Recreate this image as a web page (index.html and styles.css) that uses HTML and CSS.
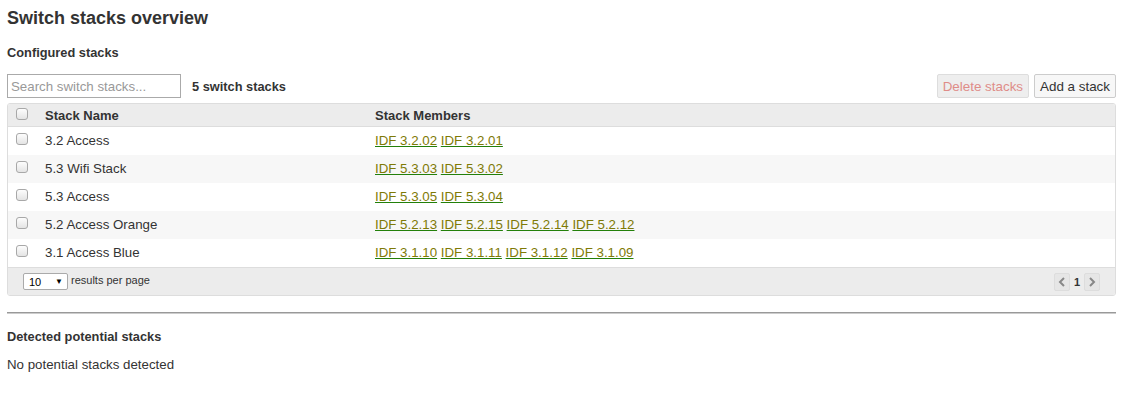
FILE: index.html
```html
<!DOCTYPE html>
<html>
<head>
<meta charset="utf-8">
<link rel="stylesheet" href="styles.css">
</head>
<body>
<div class="page">
  <h1 class="title">Switch stacks overview</h1>
  <h2 class="section-title">Configured stacks</h2>
  <div class="toolbar">
    <div class="toolbar-left">
      <input class="search" type="text" placeholder="Search switch stacks...">
      <span class="count">5 switch stacks</span>
    </div>
    <div class="toolbar-right">
      <button class="btn btn-disabled">Delete stacks</button>
      <button class="btn">Add a stack</button>
    </div>
  </div>
  <div class="table-box">
    <div class="row head">
      <div class="cell-check"><span class="cb"></span></div>
      <div class="cell-name">Stack Name</div>
      <div class="cell-members">Stack Members</div>
    </div>
    <div class="row">
      <div class="cell-check"><span class="cb"></span></div>
      <div class="cell-name">3.2 Access</div>
      <div class="cell-members"><a href="#">IDF 3.2.02</a> <a href="#">IDF 3.2.01</a></div>
    </div>
    <div class="row alt">
      <div class="cell-check"><span class="cb"></span></div>
      <div class="cell-name">5.3 Wifi Stack</div>
      <div class="cell-members"><a href="#">IDF 5.3.03</a> <a href="#">IDF 5.3.02</a></div>
    </div>
    <div class="row">
      <div class="cell-check"><span class="cb"></span></div>
      <div class="cell-name">5.3 Access</div>
      <div class="cell-members"><a href="#">IDF 5.3.05</a> <a href="#">IDF 5.3.04</a></div>
    </div>
    <div class="row alt">
      <div class="cell-check"><span class="cb"></span></div>
      <div class="cell-name">5.2 Access Orange</div>
      <div class="cell-members"><a href="#">IDF 5.2.13</a> <a href="#">IDF 5.2.15</a> <a href="#">IDF 5.2.14</a> <a href="#">IDF 5.2.12</a></div>
    </div>
    <div class="row">
      <div class="cell-check"><span class="cb"></span></div>
      <div class="cell-name">3.1 Access Blue</div>
      <div class="cell-members"><a href="#">IDF 3.1.10</a> <a href="#">IDF 3.1.11</a> <a href="#">IDF 3.1.12</a> <a href="#">IDF 3.1.09</a></div>
    </div>
    <div class="footer">
      <div class="per-page">
        <span class="select"><span>10</span><span class="arrow">&#9660;</span></span>
        <span class="per-label">results per page</span>
      </div>
      <div class="pager">
        <span class="pg-btn"><svg width="8" height="10" viewBox="0 0 8 10"><path d="M6 1 L2 5 L6 9" fill="none" stroke="#888" stroke-width="2"/></svg></span>
        <span class="pg-num">1</span>
        <span class="pg-btn"><svg width="8" height="10" viewBox="0 0 8 10"><path d="M2 1 L6 5 L2 9" fill="none" stroke="#888" stroke-width="2"/></svg></span>
      </div>
    </div>
  </div>
  <hr class="divider">
  <h2 class="section-title detected">Detected potential stacks</h2>
  <p class="empty">No potential stacks detected</p>
</div>
</body>
</html>
```

FILE: styles.css
```css
html, body {
  margin: 0;
  padding: 0;
  background: #fff;
}
body {
  font-family: "Liberation Sans", Arial, sans-serif;
  font-size: 13.3px;
  color: #333;
}
.page {
  padding: 7px 8px 0 7px;
}
.title {
  font-size: 18px;
  font-weight: bold;
  margin: 0;
  line-height: 22px;
  color: #333;
}
.section-title {
  font-size: 12.8px;
  font-weight: bold;
  margin: 0;
  line-height: 16px;
  margin-top: 16px;
  color: #333;
}
.toolbar {
  display: flex;
  justify-content: space-between;
  align-items: center;
  margin-top: 13px;
  height: 24px;
}
.toolbar-left {
  display: flex;
  align-items: center;
}
.search {
  box-sizing: border-box;
  width: 174px;
  height: 24px;
  border: 1px solid #aaa;
  padding: 1px 3px;
  font-family: "Liberation Sans", Arial, sans-serif;
  font-size: 13.3px;
  margin: 0;
  border-radius: 0;
  outline: none;
}
.search::placeholder {
  color: #999;
}
.count {
  font-weight: bold;
  font-size: 12.8px;
  margin-left: 11px;
}
.toolbar-right {
  display: flex;
  gap: 5px;
}
.btn {
  box-sizing: border-box;
  height: 24px;
  padding: 0 5px;
  font-family: "Liberation Sans", Arial, sans-serif;
  font-size: 13.4px;
  color: #333;
  background: #f7f7f7;
  border: 1px solid #ccc;
  border-radius: 2px;
}
.btn-disabled {
  color: #df8c88;
  background: #eee;
  border-color: #ddd;
}
.table-box {
  margin-top: 5px;
  border: 1px solid #ddd;
  border-radius: 3px;
  overflow: hidden;
}
.row {
  display: flex;
  align-items: center;
  box-sizing: border-box;
  height: 28px;
  padding-bottom: 2px;
  background: #fff;
}
.row.alt {
  background: #f7f7f7;
}
.row.head {
  height: 23px;
  padding-bottom: 0;
  background: #ececec;
  border-bottom: 1px solid #ddd;
  font-weight: bold;
  font-size: 13px;
}
.cell-check {
  box-sizing: border-box;
  width: 37px;
  padding-left: 8px;
  display: flex;
}
.cb {
  box-sizing: border-box;
  width: 12px;
  height: 12px;
  margin-bottom: 2px;
  border: 1px solid #a8a8a8;
  border-radius: 3px;
  background: linear-gradient(#fdfdfd, #e4e4e4);
}
.cell-name {
  width: 330px;
}
.cell-members a {
  color: #7f7a06;
  text-decoration: underline;
  text-decoration-color: #23800a;
}
.footer {
  display: flex;
  justify-content: space-between;
  align-items: center;
  height: 27px;
  background: #ececec;
  border-top: 1px solid #ddd;
  padding: 0 15px;
}
.per-page {
  display: flex;
  align-items: center;
}
.select {
  box-sizing: border-box;
  display: inline-flex;
  justify-content: space-between;
  align-items: center;
  width: 45px;
  height: 17px;
  border: 1px solid #aaa;
  border-radius: 2px;
  background: #fff;
  padding: 0 4px 0 5px;
  font-size: 11px;
  color: #000;
}
.arrow {
  font-size: 8px;
}
.per-label {
  font-size: 11px;
  margin-left: 3px;
  margin-bottom: 3px;
}
.pager {
  display: flex;
  align-items: center;
  gap: 4px;
}
.pg-btn {
  box-sizing: border-box;
  width: 16px;
  height: 18px;
  border: 1px solid #ddd;
  border-radius: 2px;
  background: #e6e6e6;
  display: flex;
  align-items: center;
  justify-content: center;
}
.pg-num {
  font-size: 11px;
  font-weight: bold;
  color: #333;
}
.divider {
  border: none;
  border-top: 1px solid #999;
  border-bottom: 1px solid #ccc;
  margin: 16px 0 0 0;
}
.detected {
  margin-top: 15px;
}
.empty {
  margin: 12px 0 0 0;
  line-height: 16px;
}
```
